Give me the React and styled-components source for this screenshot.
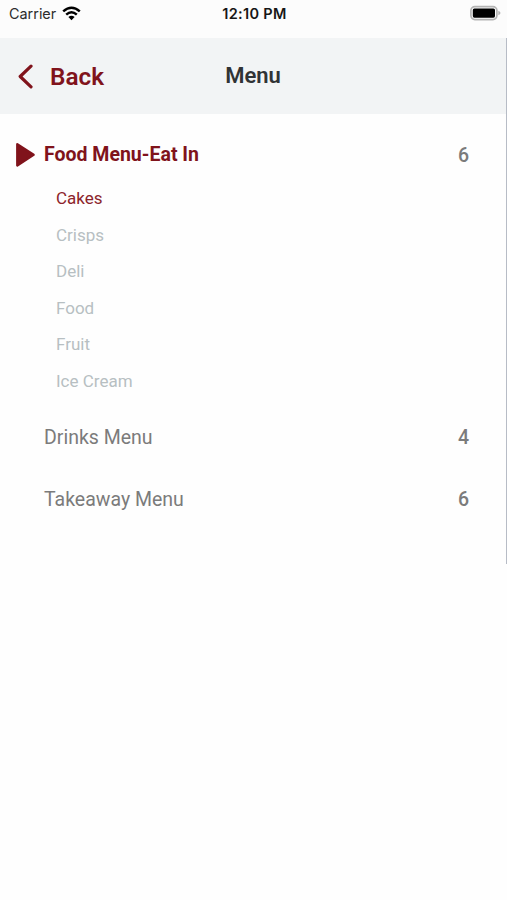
import React from 'react';
import styled, { createGlobalStyle } from 'styled-components';

const GlobalStyle = createGlobalStyle`
  * { box-sizing: border-box; }
  body { margin: 0; background: #fefefe; font-family: Roboto, sans-serif; }
  ul { list-style: none; margin: 0; padding: 0; }
`;

const Screen = styled.div`
  width: 100%;
  height: 900px;
  overflow: hidden;
`;

const StatusBar = styled.div`
  height: 38px;
  padding: 3px 7px 0 9px;
  display: grid;
  grid-template-columns: 1fr auto 1fr;
  align-items: start;
  background: #fcfcfc;
  color: #161616;
  font-family: Inter, sans-serif;
  line-height: 22px;
`;

const Carrier = styled.div`
  display: flex;
  align-items: center;
  gap: 5.5px;
  height: 22px;
  font-size: 14.4px;
  color: #2c2c2c;

  svg { margin-top: -2px; }
`;

const Clock = styled.div`
  font-size: 14.5px;
  font-weight: 600;
  letter-spacing: 0.3px;
`;

const BatterySlot = styled.div`
  display: flex;
  justify-content: flex-end;
  padding-top: 2px;
  margin-right: -1px;
`;

const Panel = styled.main`
  height: 526px;
  border-right: 1px solid #b7bcc6;
`;

const Header = styled.header`
  height: 76px;
  display: grid;
  grid-template-columns: 1fr auto 1fr;
  align-items: center;
  background: #f2f4f5;
  padding-left: 17px;
  padding-right: 17px;
`;

const BackButton = styled.button`
  display: flex;
  align-items: center;
  gap: 16px;
  padding: 1px 0 0;
  border: 0;
  background: none;
  color: #80131b;
  font: 600 24.3px/30px Roboto, sans-serif;
`;

const Title = styled.h1`
  margin: 0;
  color: #303335;
  font-size: 22px;
  font-weight: 600;
  line-height: 28px;
`;

const MenuList = styled.ul`
  padding-top: 10px;
`;

const Row = styled.div`
  height: ${(p) => (p.$active ? '56px' : '62.5px')};
  padding: ${(p) => (p.$active ? '5px 37px 0 15px' : '0 37px 0 15px')};
  display: grid;
  grid-template-columns: 29px 1fr auto;
  align-items: ${(p) => (p.$active ? 'start' : 'center')};
`;

const Marker = styled.span`
  display: flex;
  align-items: center;
  height: 52px;
`;

const Label = styled.span`
  color: ${(p) => (p.$active ? '#80131b' : '#7b7b7b')};
  font-size: 19.5px;
  font-weight: ${(p) => (p.$active ? 700 : 400)};
  line-height: 52px;
`;

const Count = styled.span`
  color: #7b7b7b;
  font-size: 19.5px;
  font-weight: 500;
  line-height: 54px;
`;

const SubList = styled.ul`
  padding: 0 0 6.7px 56px;
`;

const SubItem = styled.li`
  height: 36.6px;
  line-height: 36.6px;
  font-size: 17px;
  color: ${(p) => (p.$selected ? '#8c242b' : '#b7bfc2')};
`;

function WifiIcon() {
  return (
    <svg width="20" height="15" viewBox="0 0 20 15" fill="none" stroke="#000" strokeWidth="2.5">
      <path d="M1.2 5.4 Q9.5 -2 17.8 5.4" />
      <path d="M4.2 8.6 Q9.5 3.9 14.8 8.6" />
      <path d="M9.5 14.2 L6.4 11.1 Q9.5 8.4 12.6 11.1 Z" fill="#000" stroke="none" />
    </svg>
  );
}

function BatteryIcon() {
  return (
    <svg width="31" height="16" viewBox="0 0 31 16">
      <rect x="0.9" y="1.6" width="26" height="13" rx="4" fill="#fcfcfc" stroke="#b4b4b4" strokeWidth="1.7" />
      <rect x="2.8" y="3.5" width="22.2" height="9.2" rx="1.6" fill="#000" />
      <path d="M28.3 5.7 Q30.5 6.5 30.5 8 Q30.5 9.5 28.3 10.3 Z" fill="#b4b4b4" />
    </svg>
  );
}

function ChevronIcon() {
  return (
    <svg width="17" height="26" viewBox="0 0 17 26" fill="none" stroke="#80131b" strokeWidth="3.2" strokeLinecap="round" strokeLinejoin="round">
      <path d="M14 2.2 L3.2 12.5 L14 22.8" />
    </svg>
  );
}

function TriangleIcon() {
  return (
    <svg width="21" height="26" viewBox="0 0 21 26" fill="#80131b" stroke="#80131b" strokeWidth="2.4" strokeLinejoin="round">
      <path d="M2.3 2.2 L18.6 12.8 L2.3 23.4 Z" />
    </svg>
  );
}

const menus = [
  { name: 'Food Menu-Eat In', count: 6, items: ['Cakes', 'Crisps', 'Deli', 'Food', 'Fruit', 'Ice Cream'] },
  { name: 'Drinks Menu', count: 4 },
  { name: 'Takeaway Menu', count: 6 },
];

export default function App() {
  return (
    <Screen>
      <GlobalStyle />
      <StatusBar>
        <Carrier>Carrier <WifiIcon /></Carrier>
        <Clock>12:10 PM</Clock>
        <BatterySlot><BatteryIcon /></BatterySlot>
      </StatusBar>
      <Panel>
        <Header>
          <BackButton><ChevronIcon />Back</BackButton>
          <Title>Menu</Title>
        </Header>
        <MenuList>
          {menus.map((menu) => {
            const active = Boolean(menu.items);
            return (
              <li key={menu.name}>
                <Row $active={active}>
                  <Marker>{active && <TriangleIcon />}</Marker>
                  <Label $active={active}>{menu.name}</Label>
                  <Count>{menu.count}</Count>
                </Row>
                {active && (
                  <SubList>
                    {menu.items.map((item, i) => (
                      <SubItem key={item} $selected={i === 0}>{item}</SubItem>
                    ))}
                  </SubList>
                )}
              </li>
            );
          })}
        </MenuList>
      </Panel>
    </Screen>
  );
}
